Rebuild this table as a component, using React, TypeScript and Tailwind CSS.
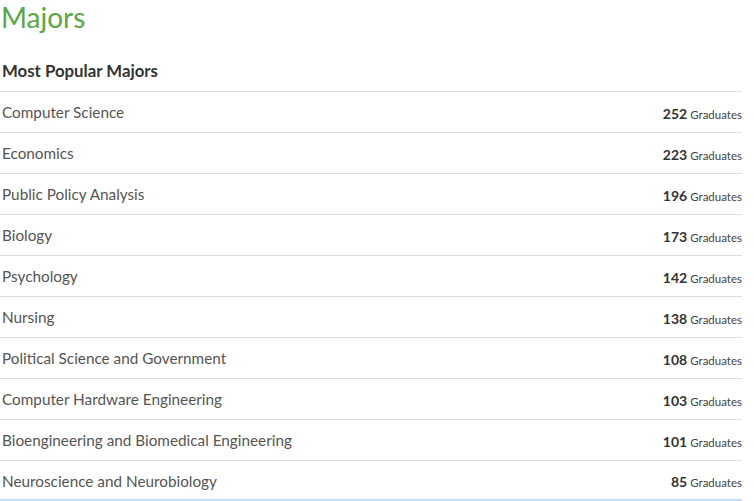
const MAJORS = [
    { name: 'Computer Science', count: 252 },
    { name: 'Economics', count: 223 },
    { name: 'Public Policy Analysis', count: 196 },
    { name: 'Biology', count: 173 },
    { name: 'Psychology', count: 142 },
    { name: 'Nursing', count: 138 },
    { name: 'Political Science and Government', count: 108 },
    { name: 'Computer Hardware Engineering', count: 103 },
    { name: 'Bioengineering and Biomedical Engineering', count: 101 },
    { name: 'Neuroscience and Neurobiology', count: 85 },
];

export default function App() {
    return (
        <div className="w-[742px] bg-white" style={{ fontFamily: 'Lato, "Liberation Sans", sans-serif' }}>
            <h1 className="h-[34px] pl-[1px] text-[28px] leading-[34px] text-[#5aa745]">Majors</h1>

            <div className="mt-[17px] h-[40px] flex items-center pl-[2px]">
                <h2 className="text-[16.8px] font-bold text-[#333]">Most Popular Majors</h2>
            </div>

            <div className="border-b-2 border-[#bfe0f5]">
                {MAJORS.map(m => (
                    <div key={m.name} className="h-[41px] last:h-[39px] pt-[1px] last:pt-[2px] flex items-center justify-between border-t border-[#dedede] pl-[2px]">
                        <span className="text-[15.3px] text-[#555]">{m.name}</span>
                        <span className="text-[#444]">
                            <span className="text-[14px] font-bold text-[#333]">{m.count}</span>
                            <span className="text-[11.5px] ml-[3px]">Graduates</span>
                        </span>
                    </div>
                ))}
            </div>
        </div>
    );
}
